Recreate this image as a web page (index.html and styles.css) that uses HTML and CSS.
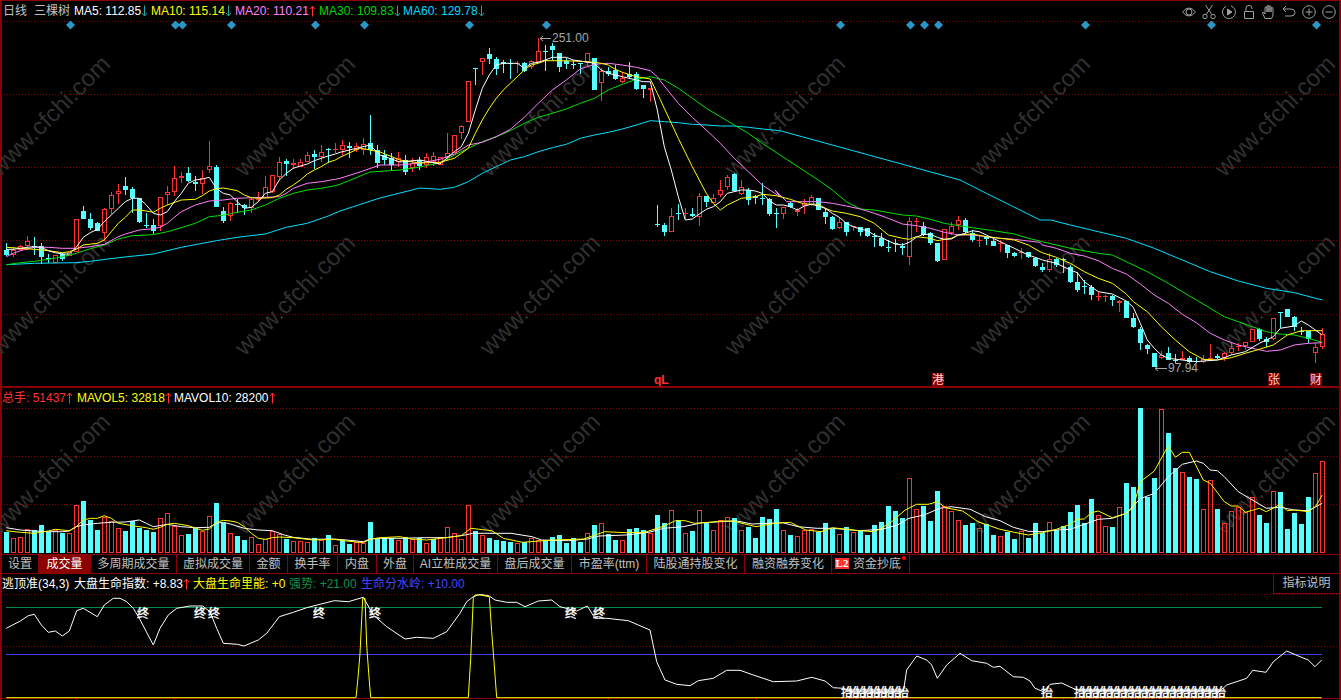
FILE: index.html
```html
<!DOCTYPE html>
<html lang="zh">
<head>
<meta charset="utf-8">
<title>三棵树 日线</title>
<link rel="stylesheet" href="styles.css">
</head>
<body>
<svg class="defs" width="0" height="0">
  <symbol id="up" viewBox="0 0 7 12"><path d="M3.5 11.5V1.5M1 4l2.5-3L6 4" fill="none" stroke="currentColor"/></symbol>
  <symbol id="down" viewBox="0 0 7 12"><path d="M3.5 .5v10M1 8l2.5 3L6 8" fill="none" stroke="currentColor"/></symbol>
</svg>
<div class="app">
  <div class="charts">
    <div class="wm">
      <span>www.cfchi.com</span><span>www.cfchi.com</span><span>www.cfchi.com</span><span>www.cfchi.com</span><span>www.cfchi.com</span><span>www.cfchi.com</span>
      <span>www.cfchi.com</span><span>www.cfchi.com</span><span>www.cfchi.com</span><span>www.cfchi.com</span><span>www.cfchi.com</span><span>www.cfchi.com</span>
      <span>www.cfchi.com</span><span>www.cfchi.com</span><span>www.cfchi.com</span><span>www.cfchi.com</span><span>www.cfchi.com</span><span>www.cfchi.com</span>
    </div>
    <section class="panel main-panel">
      <header class="legend legend-main">
        <span class="gray name-a">日线</span><span class="gray name-b">三棵树</span>
        <span class="item w77 white">MA5: 112.85<svg class="ar teal"><use href="#down"/></svg></span>
        <span class="item w84 yellow">MA10: 115.14<svg class="ar teal"><use href="#down"/></svg></span>
        <span class="item w84 pink">MA20: 110.21<svg class="ar red"><use href="#up"/></svg></span>
        <span class="item w84 green">MA30: 109.83<svg class="ar teal"><use href="#down"/></svg></span>
        <span class="item w84 sky">MA60: 129.78<svg class="ar teal"><use href="#down"/></svg></span>
        <span class="tools">
          <svg viewBox="0 0 14 14"><path d="M.5 7Q7-1 13.500 7Q7 15 .5 7Z"/><circle cx="7" cy="7" r="3"/></svg>
          <svg viewBox="0 0 14 14"><circle cx="3" cy="11.500" r="2.200"/><circle cx="11" cy="11.500" r="2.200"/><path d="M4.300 9.500 10.500 0M9.700 9.500 3.500 0"/></svg>
          <svg viewBox="0 0 14 14"><path d="M9 .9A6.500 6.500 0 1 1 4 1.300"/><path d="M5.500 4v6l4.500-3Z" class="solid"/></svg>
          <svg viewBox="0 0 14 14"><path d="M2.500 6.500h9v7h-9ZM4 6.500V3Q4 .5 7 .5T10 3V4"/></svg>
          <svg viewBox="0 0 14 14"><path d="M3 13.500 .5 8Q.5 6.500 2 7.500L3 9V2.500Q4 1.300 5 2.500V7 1Q6-.2 7 1V7 1.500Q8 .3 9 1.500V7 3Q10.300 2 11 3V9Q11 12 9.500 13.500Z"/></svg>
          <svg viewBox="0 0 14 14"><path d="M4 1 1 4l3 3M1 4H9Q13 4 13 7.500T9 11H3"/></svg>
          <svg viewBox="0 0 14 14"><circle cx="7" cy="7" r="6.300"/><path d="M3.500 7h7M7 3.500v7"/></svg>
          <svg viewBox="0 0 14 14"><circle cx="7" cy="7" r="6.300"/><path d="M3.500 7h7"/></svg>
        </span>
      </header>
      <svg id="main" class="plot plot-main" viewBox="2 21 1337 365">
        <g class="annot">
          <text x="552" y="42">251.00</text>
          <text x="1168" y="372">97.94</text>
        </g>
      </svg>
    </section>
    <section class="panel vol-panel">
      <header class="legend legend-vol">
        <span class="item w75 red">总手: 51437<svg class="ar red"><use href="#up"/></svg></span>
        <span class="item w97 yellow">MAVOL5: 32818<svg class="ar red"><use href="#up"/></svg></span>
        <span class="item white">MAVOL10: 28200<svg class="ar red"><use href="#up"/></svg></span>
      </header>
      <svg id="vol" class="plot plot-vol" viewBox="2 407 1337 147"></svg>
    </section>
  </div>
  <nav class="tabs">
    <span>设置</span><span class="on">成交量</span><span>多周期成交量</span><span>虚拟成交量</span><span>金额</span><span>换手率</span><span>内盘</span><span>外盘</span><span>AI立桩成交量</span><span>盘后成交量</span><span>市盈率(ttm)</span><span>陆股通持股变化</span><span>融资融券变化</span>
    <span class="l2-tab"><b class="l2">L2</b>资金抄底<i class="dot"></i></span>
  </nav>
  <section class="panel ind-panel">
    <header class="legend legend-ind">
      <span class="white w72">逃顶准(34,3)</span>
      <span class="white w119">大盘生命指数: +8.83<svg class="ar red"><use href="#up"/></svg></span>
      <span class="yellow w96">大盘生命里能: +0</span>
      <span class="dk-green w72">强势: +21.00</span>
      <span class="blue">生命分水岭: +10.00</span>
      <span class="explain">指标说明</span>
    </header>
    <svg id="ind" class="plot plot-ind" viewBox="2 594 1337 106"></svg>
  </section>
</div>
<script src="chart.js"></script>
</body>
</html>
```
FILE: styles.css
```css
* { box-sizing: border-box; }
html, body { margin: 0; height: 100%; background: #000; overflow: hidden; }
body { font: 12px/19px "Liberation Sans", "Noto Sans CJK SC", sans-serif; color: #c0c0c0; }
.defs { position: absolute; }
.app { width: 1341px; height: 700px; display: flex; flex-direction: column; border-top: 1px solid #8b0000; border-left: 2px solid #8b0000; border-right: 2px solid #8b0000; }
.charts { position: relative; }
.wm { position: absolute; left: -2px; top: -1px; width: 1341px; height: 555px; overflow: hidden; display: grid; grid-template-columns: repeat(6, 245px); grid-auto-rows: 179px; padding-top: 2px; pointer-events: none; }
.wm span { display: block; width: 245px; height: 179px; line-height: 179px; text-align: center; font-size: 24px; color: #303030; transform: translate(-73px, 24px) rotate(-45deg); white-space: nowrap; }
.panel { position: relative; }
.main-panel { height: 387px; border-bottom: 2px solid #8b0000; }
.vol-panel { height: 166px; }
.plot { display: block; width: 1337px; }
.plot-main { height: 365px; }
.plot-vol { height: 147px; }
.plot-ind { height: 106px; }
.legend { display: flex; align-items: flex-start; white-space: nowrap; padding-top: 1px; }
.legend-main { height: 20px; padding-left: 1px; }
.legend-vol { height: 19px; }
.legend-ind { height: 20px; }
.legend .item { display: block; }
.name-a { width: 31px; }
.name-b { width: 40px; }
.w72 { width: 72px; }
.w77 { width: 77px; }
.w84 { width: 84px; }
.w75 { width: 75px; }
.w96 { width: 96px; }
.w97 { width: 97px; }
.w119 { width: 119px; }
.gray { color: #c0c0c0; }
.white { color: #fff; }
.yellow { color: #ff0; }
.pink { color: #ff80ff; }
.green { color: #00d800; }
.sky { color: #00d8ff; }
.red { color: #ff3232; }
.teal { color: #22a6a6; }
.dk-green { color: #10904a; }
.blue { color: #4646ff; }
.ar { width: 7px; height: 12px; vertical-align: -2px; margin-left: 0; }
.tools { margin-left: auto; display: flex; gap: 6px; padding: 3px 3px 0 0; }
.tools svg { width: 14px; height: 14px; fill: none; stroke: #a0a0a0; stroke-width: 1; overflow: visible; }
.tools .solid { fill: #a0a0a0; }
.tabs { display: grid; grid-template-columns: 37px 52px 86px 73px 38px 50px 39px 37px 84px 74px 75px 98px 87px 78px; height: 20px; border-top: 1px solid #8b0000; border-bottom: 1px solid #8b0000; width: 100%; line-height: 18px; text-align: center; }
.tabs > span { border-right: 1px solid #8b0000; position: relative; }
.tabs .on { background: #8b0000; color: #fff; }
.l2-tab { display: flex; justify-content: flex-start; padding-left: 3px; }
.l2 { display: block; width: 14px; height: 11px; margin: 3px 4px 0 0; background: #f33; color: #fff; font: bold 11px/11px "Liberation Serif", serif; text-align: center; }
.dot { position: absolute; right: 3px; top: 1px; width: 4px; height: 4px; border-radius: 50%; background: #f00; }
.explain { margin-left: auto; margin-top: -1px; width: 66px; height: 20px; text-align: center; color: #c0c0c0; border-left: 1px solid #8b0000; border-bottom: 1px solid #8b0000; }
.annot text, .sig, .flag { font: 12px "Liberation Sans", "Noto Sans CJK SC", sans-serif; }
.annot text { fill: #a8a8a8; }
.sig { fill: #fff; stroke: #fff; stroke-width: .35; }
.grid { stroke: #8b0000; stroke-dasharray: 1 2; stroke-width: 1; }
.ln { fill: none; stroke-width: 1; }
.crisp { shape-rendering: crispEdges; }
.diamond { fill: #2b97c7; }
.qL { fill: #ff3232; font: bold 12px "Liberation Sans", sans-serif; }
.flagbg { fill: #800000; }
.flag { fill: #ffd0d0; }
```
FILE: chart.js
```js
const NS = 'http://www.w3.org/2000/svg';
function el(parent, name, attrs, text) {
  const e = document.createElementNS(NS, name);
  for (const k in attrs) e.setAttribute(k, attrs[k]);
  if (text) e.textContent = text;
  parent.appendChild(e);
  return e;
}
const UP = '#ff3232', DOWN = '#55ffff';
const main = document.getElementById('main');
const vol = document.getElementById('vol');
const ind = document.getElementById('ind');
const mainBack = el(main, 'g', {});
main.insertBefore(mainBack, main.firstChild);

function hgrid(svg, ys, x2) {
  ys.forEach(y => el(svg, 'line', { x1: 4, x2: x2 || 1339, y1: y + .5, y2: y + .5, class: 'grid' }));
}
hgrid(mainBack, [21, 94, 167, 240, 314]);
hgrid(vol, [408, 456, 504]);
hgrid(ind, [594, 646]);

/* candle table: type, body top, body bottom, wick top, wick bottom, in 3x crop units */
const candles = [];
function addCandles(str, y0, scale) {
  str.trim().split(/\s+/).forEach(s => {
    const v = s.slice(1).split(',').map(n => y0 + n / scale);
    candles.push({ up: s[0] === 'r', t: v[0], b: v[1], wt: v[2], wb: v[3] });
  });
}
addCandles(`c361,375,340,378 r360,375,350,380 r348,360,345,362 r333,348,318,360 c347,349,322,375 c349,380,340,403 c385,387,372,400 r374,400,374,400 c372,388,368,392 r365,377,365,377 r268,365,268,365 c243,267,228,267 c267,294,250,300 c279,304,276,304 r238,310,235,332 r196,238,186,252 r184,193,163,222 c168,180,141,195 c178,205,170,250 c205,276,204,280 c284,286,250,294 c285,302,267,312 r202,288,202,303 r187,194,168,225 r145,185,108,197 r139,144,127,159 c129,153,112,156 c155,161,138,183 r145,161,120,192 r109,120,33,128 c111,231,105,232 c244,273,232,278 r219,259,216,273 c221,223,208,248 c225,234,223,255 r206,234,200,248 r206,210,187,215 r171,205,138,205 r135,186,135,190 r95,140,82,150 c92,101,86,137 r98,104,88,117 r96,110,88,110 r76,95,65,97 c73,82,60,117 r67,80,45,95 c57,59,55,100 r57,59,40,70`, 130, 3);
addCandles(`r145,150,140,155 c146,148,142,158 r146,150,143,152 r144,150,138,155 c143,150,115,155 c150,163,145,168 c155,160,150,165 c158,165,153,170 r158,162,152,167 c160,172,155,175 r163,168,158,172 c160,166,157,170 r157,165,153,168 r156,162,152,166`, 0, 1);
addCandles(`r380,405,380,405 r370,385,310,390 r316,368,316,370 r288,310,285,328 r154,275,154,275 c115,118,115,165 r85,95,83,135 c72,88,55,102 c87,117,82,135 c97,101,90,130 c98,100,88,148 r98,101,93,130 c100,122,97,125 r92,110,90,118 r64,95,25,97 c64,66,45,122 c47,60,40,90 c70,110,68,125 c92,102,85,118 c102,104,90,117 c100,103,100,132 r70,100,70,112 c85,180,85,180 r124,158,115,212 c124,132,110,138 c120,148,105,150 r143,155,125,158 c132,140,97,148 c132,177,125,180 c165,178,165,203 r175,181,175,215 c583,585,525,590 c585,605,580,617 r558,605,535,605 c548,550,522,570 r550,553,535,568 c552,558,535,562 r498,560,490,587 c498,515,498,530 r503,518,492,520 r481,496,450,500 r442,470,435,480 c432,484,430,485 r470,492,450,495 c480,510,475,525 c498,503,495,522 c505,507,460,525 c507,552,505,558 c550,552,535,595`, 30, 3);
addCandles(`r80,102,80,118 c70,80,65,85 r90,97,85,108 r68,78,57,102 r52,75,45,78 c55,90,55,90 c95,110,85,132 c110,148,107,150 r127,145,112,147 c125,155,125,167 r137,140,137,152 c140,155,140,167 c145,168,145,172 c168,172,160,200 c173,199,160,202 c200,203,180,215 c190,192,178,215 c197,205,188,225 r124,232,112,255 r122,125,115,157 c137,165,125,168 c160,188,155,195 c188,243,188,245 r148,239,148,239 r138,160,125,165 r120,135,108,150 c120,157,113,160 c160,180,150,185 r180,183,165,200 c170,178,170,195 c182,198,178,198 r190,193,180,215 c195,218,195,233 c218,227,215,230 r215,220,205,237 c217,230,215,233 c235,258,235,260`, 180, 3);
addCandles(`c141,150,128,157 r118,150,98,155 c118,135,113,140 c118,120,113,158 c142,186,135,188 c185,210,155,215 c197,199,180,223 c201,226,195,240 r229,232,215,243 r227,230,225,245 c227,240,225,258 r243,249,240,275 c243,294,243,295 c295,322,280,323 c328,368,322,390 c375,388,372,402 c400,440,400,442 r405,413,392,418 c400,420,380,420 c420,422,402,430 r414,420,392,420 c414,425,408,428 c424,426,410,430 r417,427,405,428 r413,415,372,420 c408,414,402,416 r400,414,395,422 r383,398,370,405 r378,382,370,392 r367,378,365,390 r327,365,327,365 c328,358,325,362 c358,366,352,382 r295,358,293,360 c277,280,277,325 c268,290,268,292 c290,320,288,332 c333,335,322,345 c332,358,332,370 r382,398,368,428 r341,382,325,388`, 220, 3);

const cg = el(main, 'g', { class: 'crisp' });
candles.forEach((c, i) => {
  const px = 6 + 7 * i, col = c.up ? UP : DOWN;
  const t = Math.round(c.t), b = Math.max(Math.round(c.b), t + 1);
  el(cg, 'rect', { x: px, y: Math.round(c.wt), width: 1, height: Math.max(1, Math.round(c.wb) - Math.round(c.wt)), fill: col });
  if (b - t < 2) {
    el(cg, 'rect', { x: px - 2, y: t, width: 5, height: 1, fill: col });
  } else if (c.up) {
    el(cg, 'rect', { x: px - 1.5, y: t + .5, width: 4, height: b - t - 1, fill: '#000', stroke: col });
  } else {
    el(cg, 'rect', { x: px - 2, y: t, width: 5, height: b - t, fill: col });
  }
});

/* polylines: segments of crop units are turned into page coordinates */
function seg(x0, y0, sx, sy, arr) {
  const out = [];
  for (let i = 0; i < arr.length; i += 2) out.push([x0 + arr[i] / sx, y0 + arr[i + 1] / sy]);
  return out;
}
function poly(svg, pts, color, w) {
  el(svg, 'polyline', { class: 'ln', stroke: color, 'stroke-width': w || 1, points: pts.map(p => p[0].toFixed(1) + ',' + p[1].toFixed(1)).join(' ') });
}

const ma = [
  { color: '#ffffff', parts: [
    seg(0,130,3,3,[19,358,40,358,61,355,82,352,103,350,124,352,145,362,166,368,187,372,208,372,229,352,250,322,271,308,292,298,313,275,334,255,355,235,376,215,397,205,418,205,439,225,460,250,481,255,502,245,523,215,544,190,565,160,586,150,607,147,628,142,649,175,670,190,691,195,712,215,733,235,754,232,775,215,796,190,817,185,838,150,859,130,880,115,901,108,922,102,943,92,964,85,985,78,1006,72,1020,67]),
    [[370,145],[380,155],[400,162],[420,160]],
    seg(440,30,3,3,[0,402,43,365,64,350,85,310,106,240,127,175,148,135,169,105,190,100,232,100,253,115,274,100,295,97,316,90,337,82,379,82,400,90,421,93,463,100,484,120,505,130,547,140,589,150,610,155,631,155,652,240,673,350,694,420,715,500,736,570,757,567,778,552,799,538,820,530,841,515,862,490,904,480,925,480,946,483,967,490,988,512,1009,525]),
    seg(700,180,3,3,[250,75,271,80,292,90,313,78,334,73,355,78,376,85,397,100,418,112,439,130,460,140,481,147,502,152,523,165,544,172,565,183,586,192,607,195,628,187,649,172,670,163,691,163,712,172,733,178,754,177,775,165,796,160,817,152,838,155,859,165,880,175,901,185,922,195,943,205,964,215,985,225,1020,237]),
    seg(1000,220,3,3,[127,120,169,130,211,150,232,158,253,185,295,215,337,222,379,243,400,262,421,310,442,360,463,385,484,405,505,415,547,420,589,425,610,423,652,420,694,405,736,395,778,370,820,350,841,325,883,318,904,303,925,315,946,330,967,345])
  ]},
  { color: '#ffff00', parts: [
    seg(0,130,3,3,[19,352,61,355,103,358,145,362,187,368,208,365,229,358,250,345,292,340,313,330,334,305,355,280,376,262,397,240,418,240,439,243,460,247,481,235,502,225,544,210,586,208,607,197,628,183,649,176,670,174,691,178,712,182,733,195,754,203,775,205,817,203,838,195,859,178,880,165,901,150,922,132,943,120,964,110,985,97,1006,90,1020,82]),
    [[360,148],[380,152],[400,160],[420,163]],
    seg(440,30,3,3,[0,397,43,385,85,355,106,310,127,270,148,235,169,205,190,180,211,160,232,140,253,120,274,105,295,100,316,92,358,92,400,93,442,95,463,97,484,100,505,105,526,118,547,127,589,140,631,147,652,190,673,235,694,280,715,325,757,410,799,490,820,520,841,540,862,525,904,505,946,500,967,493,1009,497]),
    seg(700,180,3,3,[271,58,292,65,313,72,355,73,376,85,397,93,439,100,481,110,523,130,565,165,607,175,628,178,649,170,691,175,712,182,733,178,754,175,775,165,817,162,859,170,901,175,943,180,985,195,1020,215]),
    seg(1000,220,3,3,[127,98,169,112,211,130,253,155,295,175,337,190,379,222,400,245,442,275,484,320,526,360,568,395,610,418,652,420,694,413,736,400,778,388,820,375,862,345,904,332,967,332])
  ]},
  { color: '#ff80ff', parts: [
    seg(0,130,3,3,[19,380,40,370,61,362,103,352,145,352,187,355,229,355,271,350,313,343,355,320,376,312,418,300,460,296,481,292,502,280,523,262,544,245,586,225,628,213,670,210,712,205,754,203,796,202,838,200,859,190,880,175,922,160,964,155,1006,148,1020,145]),
    [[360,172],[380,165],[400,165],[420,163]],
    seg(440,30,3,3,[0,388,43,372,85,345,127,337,169,320,211,298,253,262,295,220,337,180,379,150,421,117,463,103,505,100,547,105,589,112,631,122,652,140,673,168,715,220,757,262,799,300,841,340,883,385,925,425,967,465,1020,500]),
    seg(700,180,3,3,[225,30,260,65,292,65,355,65,397,70,439,78,481,87,523,100,565,115,607,132,649,137,691,145,733,157,775,165,817,165,859,170,901,175,943,178,985,183,1020,187]),
    seg(1000,220,3,3,[127,75,169,85,211,100,253,108,295,122,337,145,379,162,421,192,463,225,505,250,547,283,589,308,631,340,673,360,715,375,757,385,799,394,841,390,883,375,925,370,967,368])
  ]},
  { color: '#00e000', parts: [
    seg(0,130,3,3,[19,404,61,398,103,394,145,388,187,380,229,370,271,356,313,345,355,327,397,317,460,314,502,305,544,293,586,280,628,260,670,256,712,247,754,240,796,225,838,205,880,190,922,180,964,175,1006,167,1020,163]),
    [[370,172],[400,170],[420,167]],
    seg(440,30,3,3,[0,398,43,375,85,355,127,335,169,320,211,302,253,280,295,262,337,250,379,237,421,220,463,205,505,180,547,163,589,148,631,140,673,150,715,175,757,205,799,235,841,260,883,285,925,310,967,340,1020,375]),
    seg(700,180,3,3,[355,0,397,30,439,65,481,87,523,90,607,105,649,108,691,118,733,130,775,137,817,143,880,152,943,162,985,175,1020,183]),
    seg(1000,220,3,3,[127,65,211,85,295,100,337,105,379,125,442,155,505,190,589,240,631,265,673,290,715,305,757,320,799,335,841,342,883,345,925,355,967,367])
  ]},
  { color: '#00e0ff', parts: [
    seg(0,130,3,3,[19,404,103,400,229,398,271,394,355,383,460,372,544,352,649,332,712,322,796,312,859,292,922,280,985,258,1020,243]),
    [[380,198],[420,188]],
    seg(440,30,3,3,[0,478,43,472,85,455,127,430,169,410,211,390,253,380,295,365,337,353,379,343,421,325,463,315,505,307,547,297,589,285,631,272,673,275,715,278,757,283,799,285,841,288,883,288,925,292,967,297,1020,302]),
    seg(700,180,3,3,[780,0,859,40,940,80,1020,120]),
    seg(1000,220,3,3,[152,0,211,15,295,35,379,55,463,85,547,120,631,155,715,183,799,205,883,218,967,240])
  ]}
];
[4, 3, 2, 1, 0].forEach(k => poly(main, ma[k].parts.flat(), ma[k].color));

/* badges, diamonds */
[70, 175, 182, 231, 315, 364, 469, 546, 840, 910, 924, 938, 1085, 1211, 1316].forEach(x => {
  el(main, 'path', { class: 'diamond', d: `M${x + .5} 20.500l4.500 4.500-4.500 4.500-4.500-4.500Z` });
});
el(main, 'path', { d: 'M551 38.500H540M543 36l-3 2.500 3 2.500', stroke: '#a8a8a8', fill: 'none' });
el(main, 'path', { d: 'M1167 368.500H1155M1158 366l-3 2.500 3 2.500', stroke: '#a8a8a8', fill: 'none' });
el(main, 'text', { class: 'qL', x: 654, y: 384 }, 'qL');
[[932, '港'], [1268, '张'], [1310, '财']].forEach(f => {
  el(main, 'rect', { class: 'flagbg', x: f[0], y: 373, width: 12, height: 13 });
  el(main, 'text', { class: 'flag', x: f[0], y: 384 }, f[1]);
});

/* volume */
const vtops = [];
function addVol(str, y0, scale) {
  str.trim().split(/\s+/).forEach(s => vtops.push({ up: s[0] === 'r', y: y0 + s.slice(1) / scale }));
}
addVol(`c442 r460 r457 r433 c435 c420 c440 r435 c443 r443 r361 c348 c405 c435 r395 r408 r430 c438 c408 c428 c435 c441 r400 r385 r423 r450 c447 c428 r438 r393 c354 c415 r445 c453 c465 r457 r478 r463 r438 r448 c462 r468 r468 r472 c459 r465 c450 r481 c465 c477 r470 r473 c411 c460 c460 c460 r465`, 385, 3);
addVol(`c457 r462 c459 r475 c462 r457 r427 r445 r463 r361 c438 r451 c460 c465 c468 c470 r475 c472 r460 r466 c465 c456 c450 c473 c460 c470 r445 c420 r415 c447 c465 r465 c432 c429 c435 r445 c390 c414 r376 c405 r445 c438 r376 c412 r436 r406 r397 c399 r436 c426 c459 c396 c402 c372 r436 c450 r454 r436 r433 c442 c414 c432 r448 c426 r441 c438 c450 c420 c411 c363 c378 c399 r280 r373 c363 c408 c318 r364 r378 r406 c420 c414 r430 c418 c450 r454`, 385, 3);
addVol(`c395 c417 r394 c414 c369 c398 r367 c390 c378 c336 c315 c370 c297 r346 r379 c381 r322 c249 c261 c24 c290 c234 r27 c99 c204 r217 c231 c237 r328 r241 c327 r370 r334 r322 r336 r292 c345 c369 r274 c276 c387 c339 c372 c291 r220 r184`, 400, 3);
const vg = el(vol, 'g', { class: 'crisp' });
vtops.forEach((v, i) => {
  const px = 6 + 7 * i, t = Math.round(v.y), bottom = 553;
  if (v.up) el(vg, 'rect', { x: px - 1.5, y: t + .5, width: 4, height: bottom - t - 1, fill: 'none', stroke: UP });
  else el(vg, 'rect', { x: px - 2, y: t, width: 5, height: bottom - t, fill: DOWN });
});
poly(vol, [
  ...seg(0,385,3,3,[19,428,61,435,103,438,145,440,187,440,208,438,229,425,250,420,292,415,334,412,376,411,418,405,439,415,460,425,502,418,544,425,586,428,628,427,649,415,670,412,691,417,733,430,775,435,817,437,853,450,880,457,940,463,1000,462,1040,465,1090,470,1110,462,1140,460]),
  ...seg(400,385,2.613,3,[0,460,60,458,120,458,170,450,190,445,290,445,345,455,370,465,440,467,490,462,520,453,590,450,650,442,690,430,740,425,790,413,840,410,880,408,920,417,1000,413,1040,425,1090,430,1130,430,1200,437,1260,433,1300,420,1330,400,1370,390,1410,370,1440,365,1490,373,1530,395]),
  ...seg(1000,400,3,3,[0,362,40,382,85,394,127,395,169,390,211,388,253,373,295,358,337,355,379,340,421,296,463,280,505,230,547,193,589,183,610,190,631,210,652,212,673,230,715,275,757,300,799,325,841,322,883,330,925,332,967,310])
], '#fff');
poly(vol, [
  ...seg(0,385,3,3,[19,437,61,442,103,445,145,438,166,433,208,437,229,425,250,405,271,400,292,400,313,392,334,400,355,415,397,422,439,428,460,433,481,427,502,418,523,415,565,422,607,436,628,432,649,412,670,406,691,408,712,412,733,425,754,445,775,460,796,463,817,458,838,456,880,458,940,465,1000,463,1040,468,1090,473,1110,463,1140,458]),
  ...seg(400,385,2.613,3,[0,455,30,462,70,465,120,458,160,452,185,430,240,437,270,460,320,472,400,465,480,462,510,450,535,440,590,443,640,442,690,423,720,407,745,407,770,415,810,412,840,408,870,408,930,425,980,415,1020,412,1060,435,1100,440,1130,428,1200,437,1240,440,1280,415,1320,375,1350,358,1380,358,1405,350,1425,368,1470,378,1510,410]),
  ...seg(1000,400,3,3,[0,388,43,397,85,405,127,398,169,388,211,373,232,358,253,357,274,338,295,333,337,353,379,340,400,322,421,245,463,213,505,137,526,172,547,157,568,157,610,240,631,250,673,305,694,318,715,318,736,337,778,325,799,335,841,313,862,332,883,330,925,335,946,320,967,285])
], '#ff0');

/* indicator */
el(ind, 'line', { x1: 6, x2: 1322, y1: 607.5, y2: 607.5, stroke: '#0a8a4a', class: 'crisp' });
el(ind, 'line', { x1: 6, x2: 1322, y1: 654.5, y2: 654.5, stroke: '#4040e8', class: 'crisp' });
el(ind, 'line', { x1: 2, x2: 1339, y1: 698.5, y2: 698.5, stroke: '#8b0000', class: 'crisp' });
[76, 174, 608, 756, 1063, 1203].forEach(x => el(ind, 'line', { x1: x + .5, x2: x + .5, y1: 698, y2: 700, stroke: '#8b0000', class: 'crisp' }));
poly(ind, [
  ...seg(0,545,3,3,[19,250,61,228,85,212,103,208,124,240,145,262,166,258,187,273,208,258,230,197,250,190,292,215,313,180,340,160,360,160,380,170,400,190,418,220,460,300,480,250,505,210,530,190,570,183,608,183,630,200,650,250,670,295,712,298,732,303,775,285,800,265,838,215,880,202,920,188,960,178,1003,167,1045,170,1090,157,1120,210,1160,245,1215,282,1250,277,1300,280,1340,260,1380,205,1400,170,1420,155]),
  ...seg(480,545,3,3,[0,148,28,153,45,165,80,172,110,172,135,185,175,168,215,165,240,185,290,198,322,183,345,220,380,220,445,227,510,255,530,350,555,405,590,418,630,422,655,407,700,400,740,376,780,376,820,390,880,410,950,408,995,397,1035,408,1060,428,1090,430,1130,445,1270,440,1280,375,1310,333,1340,345,1355,360,1372,400,1400,360]),
  ...seg(960,545,3,3,[0,325,35,347,80,355,100,367,120,364,160,395,190,397,210,408,225,430,250,440,270,418,305,414,350,435,780,438,800,420,860,400,878,376,918,382,940,350,980,318,1020,335,1045,345,1065,365,1085,345])
], '#fff');
poly(ind, [
  ...seg(0,545,3,3,[19,458,1068,458,1074,398,1080,325,1088,160,1095,160,1100,300,1106,385,1112,458,1405,458,1412,340,1420,160,1425,150,1440,150]),
  ...seg(480,545,3,3,[28,155,35,260,42,350,50,458,1440,458]),
  ...seg(960,545,3,3,[0,458,1085,458])
], '#ff0', 1.5);
[143, 200, 214, 319, 375, 571, 599].forEach(x => el(ind, 'text', { class: 'sig', x: x - 6, y: 618 }, '终'));
const bottomGlyph = x => el(ind, 'text', { class: 'sig', x: x - 6, y: 697 }, '抬');
for (let x = 847; x <= 906; x += 7) bottomGlyph(x);
bottomGlyph(1047);
for (let x = 1080; x <= 1222; x += 7) bottomGlyph(x);
```
